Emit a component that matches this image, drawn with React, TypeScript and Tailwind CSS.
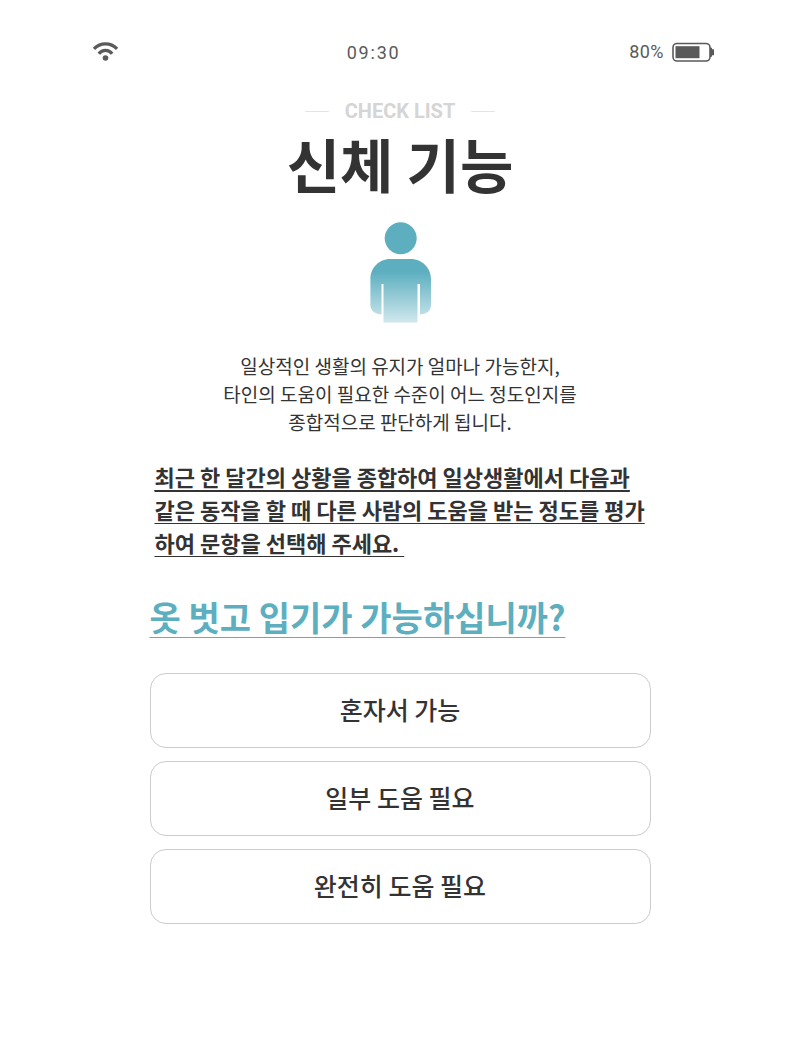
const options = ['혼자서 가능', '일부 도움 필요', '완전히 도움 필요'];

function WifiIcon() {
  return (
    <svg width="25" height="20" viewBox="0 0 25 20" fill="none" stroke="#5a5a5a" strokeWidth="3.2" aria-hidden="true">
      <path d="M1 6.900C7.200 .1 17.800 .1 24 6.900" />
      <path d="M5.800 11.700C9.400 7.200 15.600 7.200 19.200 11.700" />
      <circle cx="12.500" cy="16" r="2.800" fill="#5a5a5a" stroke="none" />
    </svg>
  );
}

function BatteryIcon() {
  return (
    <svg width="43" height="20" viewBox="0 0 43 20" aria-hidden="true">
      <rect x="1" y="1.500" width="37" height="17.500" rx="4" fill="none" stroke="#5a5a5a" strokeWidth="1.600" />
      <rect x="3.500" y="4.200" width="24" height="12" fill="#5a5a5a" />
      <path d="M38 5.800h2v1.500h2v6h-2v1.500h-2z" fill="#5a5a5a" />
    </svg>
  );
}

function PersonIcon() {
  return (
    <svg className="mx-auto" width="62" height="102" viewBox="0 0 62 102" aria-hidden="true">
      <defs>
        <linearGradient id="body" gradientUnits="userSpaceOnUse" x1="0" y1="50" x2="0" y2="102">
          <stop offset="0" stopColor="#5dafc0" />
          <stop offset="1" stopColor="#d3e9ee" />
        </linearGradient>
      </defs>
      <circle cx="31.700" cy="16.200" r="16" fill="#5dafc0" />
      <path
        d="M21 37H42C53 37 62 46 62 57V83C62 89 57 92.500 51 92.500V62H48.500V100.500H14.500V62H12.500V92.500C7 92.500 1.400 89 1.400 83V57C1.400 46 10 37 21 37Z"
        fill="url(#body)"
      />
    </svg>
  );
}

export default function App() {
  return (
    <div className="min-h-screen bg-white pb-10 font-['Noto_Sans_CJK_KR',sans-serif] text-[#333333]">
      <header className="flex h-[84px] items-center justify-between pt-5 pr-[85px] pl-[93px] font-['Roboto',sans-serif] text-lg text-[#5a5a5a]">
        <WifiIcon />
        <time className="pt-0.5 tracking-widest">09:30</time>
        <div className="flex items-center gap-2">
          <span className="tracking-wide">80%</span>
          <BatteryIcon />
        </div>
      </header>

      <main>
        <div className="flex items-center justify-center gap-4 pt-3">
          <span className="h-px w-6 bg-[#e4e4e4]" />
          <p className="font-['Roboto',sans-serif] text-xl leading-[30px] font-bold text-[#d5d5d5]">CHECK LIST</p>
          <span className="h-px w-6 bg-[#e4e4e4]" />
        </div>
        <h1 className="text-center text-[58px] leading-[74px] font-bold">신체 기능</h1>
        <div className="pt-[22px]">
          <PersonIcon />
        </div>

        <p className="mt-7 text-center text-[19px] leading-7">
          일상적인 생활의 유지가 얼마나 가능한지,
          <br />
          타인의 도움이 필요한 수준이 어느 정도인지를
          <br />
          종합적으로 판단하게 됩니다.
        </p>

        <section className="mx-auto mt-6 w-full max-w-[501px]">
          <p className="pl-[5px] text-[22px] leading-[33px] font-bold underline decoration-1 underline-offset-4 [text-decoration-skip-ink:none]">
            <span className="underline decoration-2 underline-offset-4 [text-decoration-skip-ink:none]">
              최근 한 달간의 상황을 종합하여 일상생활에서 다음과
            </span>
            <br />
            같은 동작을 할 때 다른 사람의 도움을 받는 정도를 평가
            <br />
            하여 문항을 선택해 주세요.&nbsp;
          </p>
          <h2
            id="question"
            className="mt-8 text-[34px] leading-[52px] font-bold text-[#5dafc0] underline decoration-1 underline-offset-[6px] [text-decoration-skip-ink:none]"
          >
            옷 벗고 입기가 가능하십니까?
          </h2>
          <div role="group" aria-labelledby="question" className="mt-[30px] flex flex-col gap-[13px]">
            {options.map((label) => (
              <button
                key={label}
                type="button"
                className="h-[75px] cursor-pointer rounded-2xl border border-[#cccccc] bg-white pb-0.5 text-[25px] font-medium"
              >
                {label}
              </button>
            ))}
          </div>
        </section>
      </main>
    </div>
  );
}
